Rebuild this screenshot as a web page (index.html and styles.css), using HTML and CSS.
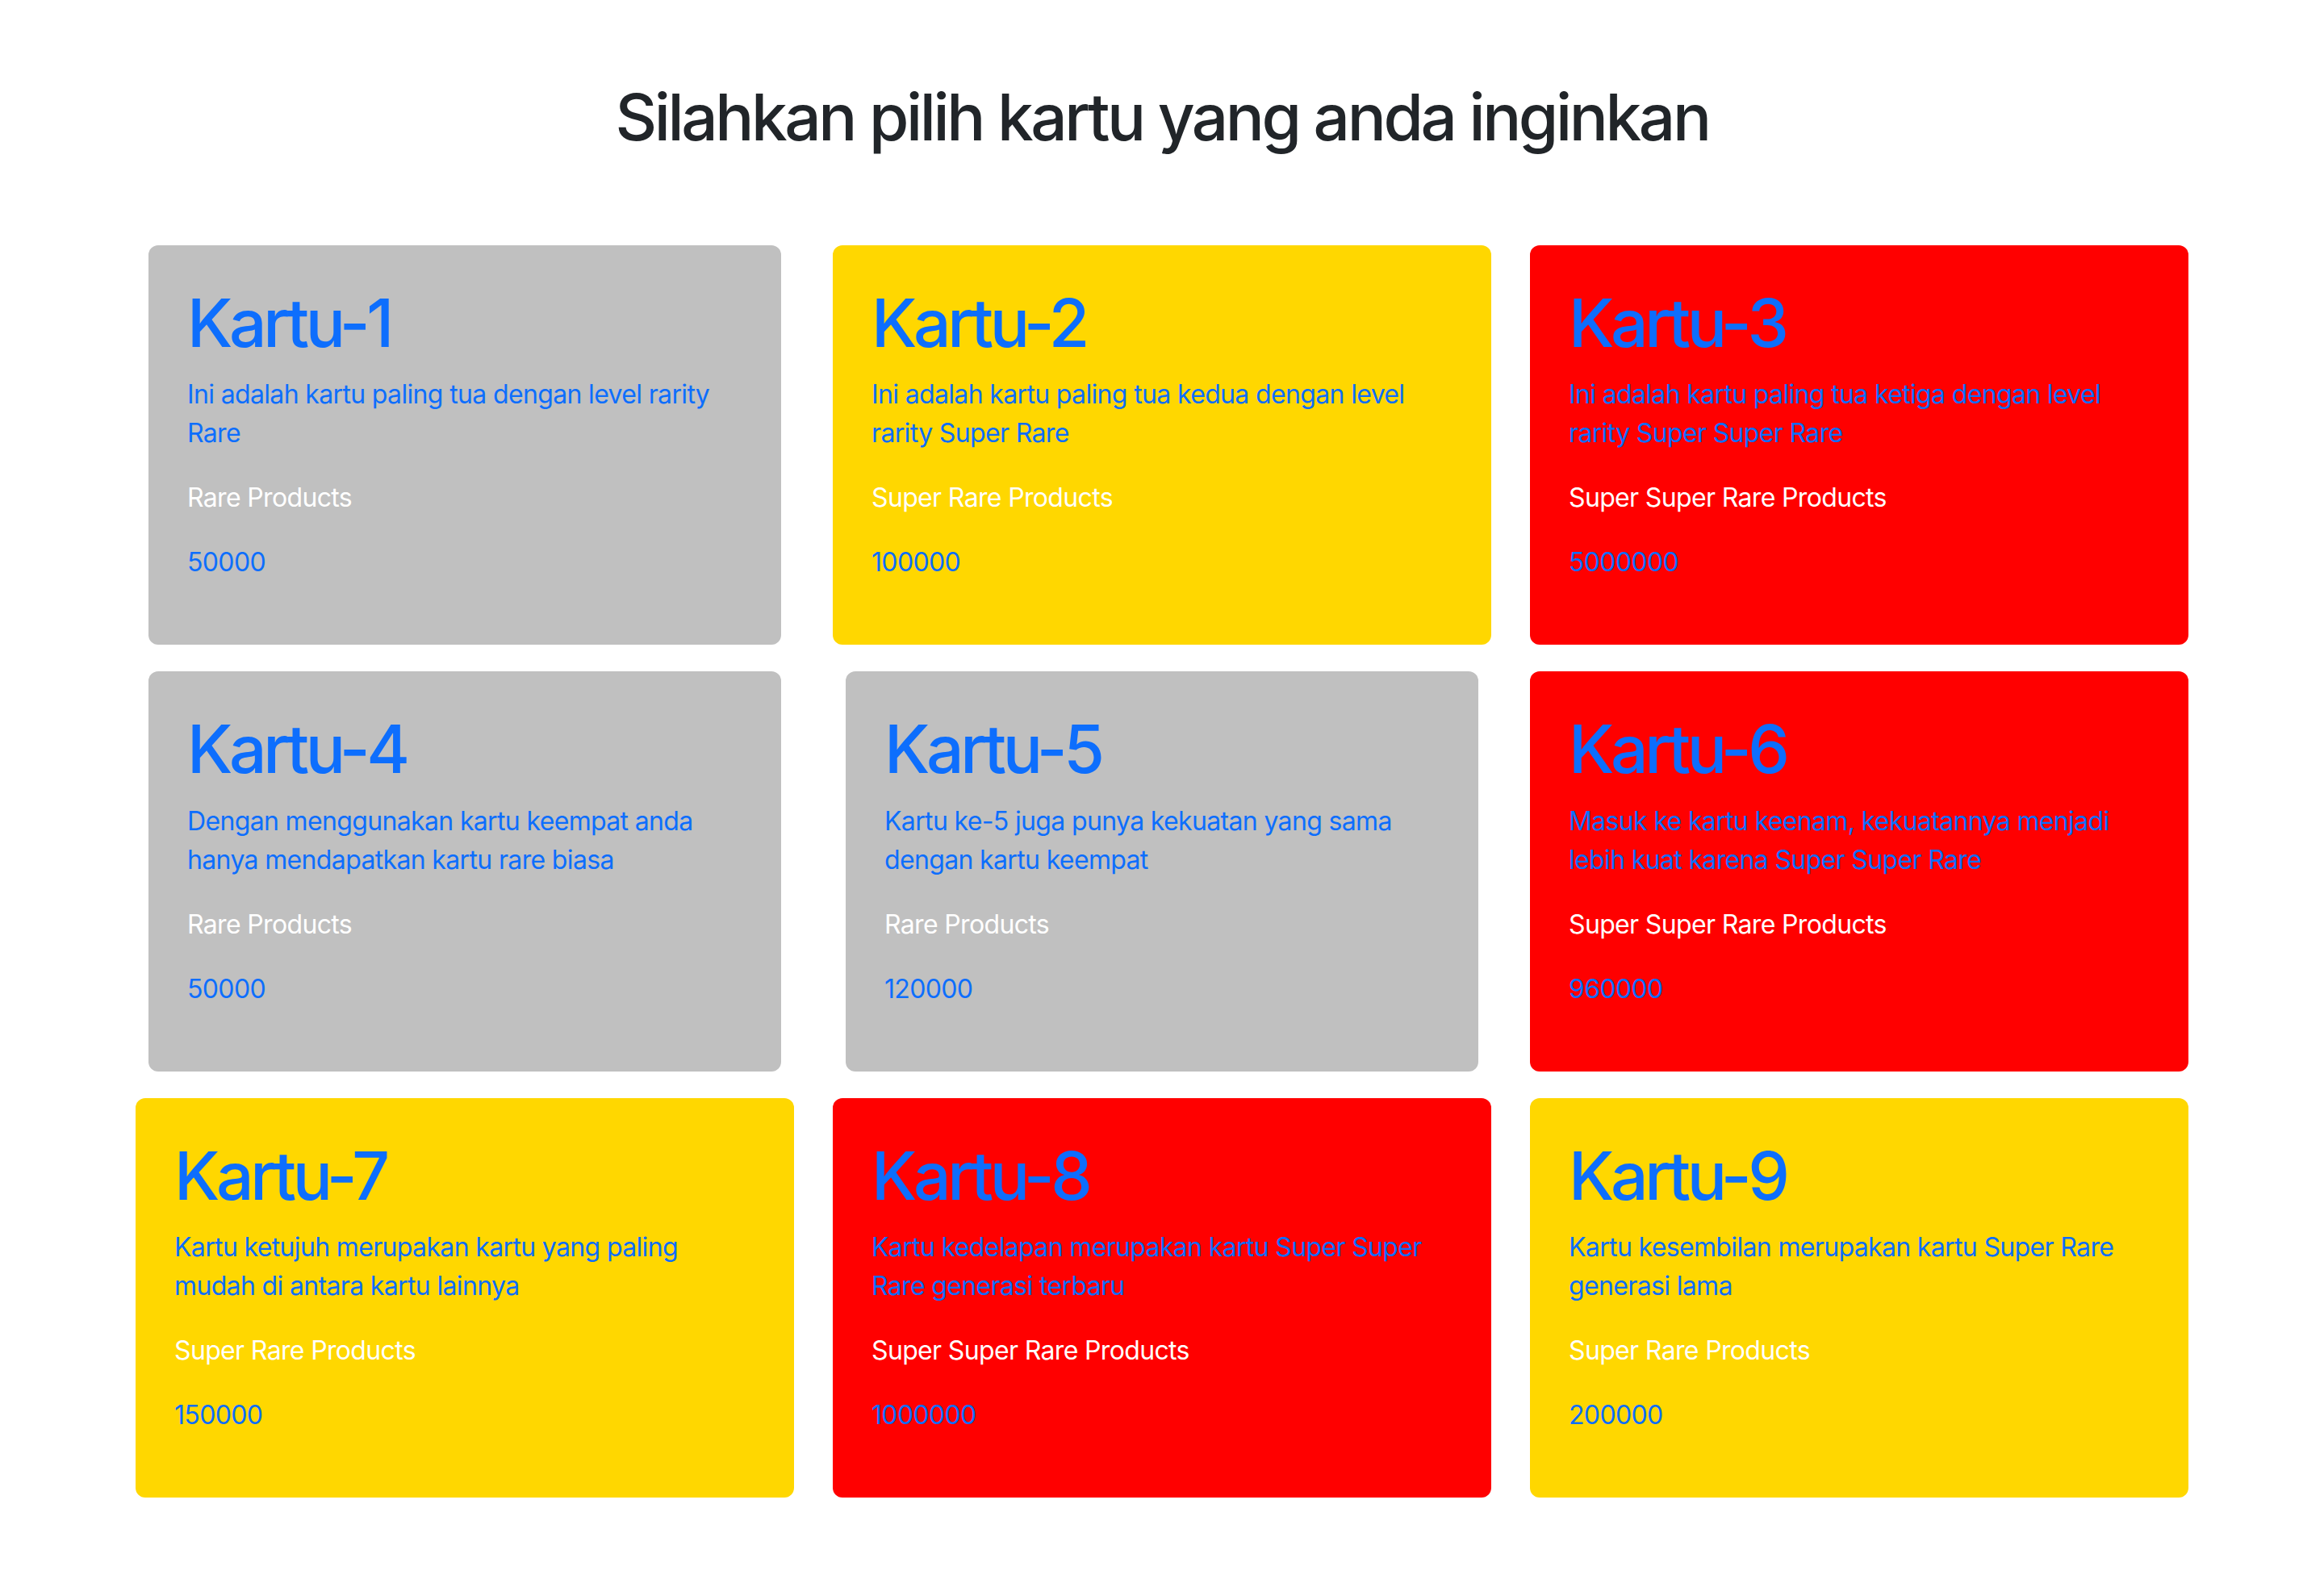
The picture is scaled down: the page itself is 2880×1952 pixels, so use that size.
FILE: index.html
```html
<!DOCTYPE html>
<html lang="id">
<head>
<meta charset="utf-8">
<title>Pilih Kartu</title>
<link rel="stylesheet" href="styles.css">
</head>
<body>
<h1 class="page-title">Silahkan pilih kartu yang anda inginkan</h1>
<main class="card-grid">
  <div class="card card-grey">
    <h2 class="card-title">Kartu-1</h2>
    <p class="card-desc">Ini adalah kartu paling tua dengan level rarity Rare</p>
    <p class="card-cat">Rare Products</p>
    <p class="card-price">50000</p>
  </div>
  <div class="card card-gold">
    <h2 class="card-title">Kartu-2</h2>
    <p class="card-desc">Ini adalah kartu paling tua kedua dengan level rarity Super Rare</p>
    <p class="card-cat">Super Rare Products</p>
    <p class="card-price">100000</p>
  </div>
  <div class="card card-red">
    <h2 class="card-title">Kartu-3</h2>
    <p class="card-desc">Ini adalah kartu paling tua ketiga dengan level rarity Super Super Rare</p>
    <p class="card-cat">Super Super Rare Products</p>
    <p class="card-price">5000000</p>
  </div>
  <div class="card card-grey">
    <h2 class="card-title">Kartu-4</h2>
    <p class="card-desc">Dengan menggunakan kartu keempat anda hanya mendapatkan kartu rare biasa</p>
    <p class="card-cat">Rare Products</p>
    <p class="card-price">50000</p>
  </div>
  <div class="card card-grey">
    <h2 class="card-title">Kartu-5</h2>
    <p class="card-desc">Kartu ke-5 juga punya kekuatan yang sama dengan kartu keempat</p>
    <p class="card-cat">Rare Products</p>
    <p class="card-price">120000</p>
  </div>
  <div class="card card-red">
    <h2 class="card-title">Kartu-6</h2>
    <p class="card-desc">Masuk ke kartu keenam, kekuatannya menjadi lebih kuat karena Super Super Rare</p>
    <p class="card-cat">Super Super Rare Products</p>
    <p class="card-price">960000</p>
  </div>
  <div class="card card-gold">
    <h2 class="card-title">Kartu-7</h2>
    <p class="card-desc">Kartu ketujuh merupakan kartu yang paling mudah di antara kartu lainnya</p>
    <p class="card-cat">Super Rare Products</p>
    <p class="card-price">150000</p>
  </div>
  <div class="card card-red">
    <h2 class="card-title">Kartu-8</h2>
    <p class="card-desc">Kartu kedelapan merupakan kartu Super Super Rare generasi terbaru</p>
    <p class="card-cat">Super Super Rare Products</p>
    <p class="card-price">1000000</p>
  </div>
  <div class="card card-gold">
    <h2 class="card-title">Kartu-9</h2>
    <p class="card-desc">Kartu kesembilan merupakan kartu Super Rare generasi lama</p>
    <p class="card-cat">Super Rare Products</p>
    <p class="card-price">200000</p>
  </div>
</main>
</body>
</html>
```

FILE: styles.css
```css
* { box-sizing: border-box; }

body {
  margin: 0;
  background: #ffffff;
  font-family: Inter, "Noto Sans", "Liberation Sans", sans-serif;
  color: #212529;
}

.page-title {
  margin: 97px 0 0;
  font-size: 80px;
  line-height: 1.2;
  font-weight: 500;
  letter-spacing: -3.4px;
  text-align: center;
  color: #212529;
}

.card-grid {
  width: 2544px;
  margin: 111px auto 0;
  display: grid;
  grid-template-columns: repeat(3, 816px);
  column-gap: 48px;
  row-gap: 33px;
  padding-bottom: 96px;
}

.card {
  border-radius: 12px;
  padding: 48px 48px 46px;
  color: #0d6efd;
}

.card-grey {
  background: #c0c0c0;
  width: 784px;
  justify-self: center;
}

.card-gold { background: #ffd700; }
.card-red { background: #ff0000; }

.card-title {
  margin: 0 0 15px;
  font-size: 82px;
  line-height: 1.2;
  font-weight: 500;
  letter-spacing: -4.3px;
  color: #0d6efd;
}

.card-desc,
.card-cat,
.card-price {
  margin: 0 0 32px;
  font-size: 32px;
  line-height: 48px;
  font-weight: 400;
  letter-spacing: -0.65px;
}

.card-cat { color: #ffffff; }
.card-desc, .card-price { color: #0d6efd; }
```
